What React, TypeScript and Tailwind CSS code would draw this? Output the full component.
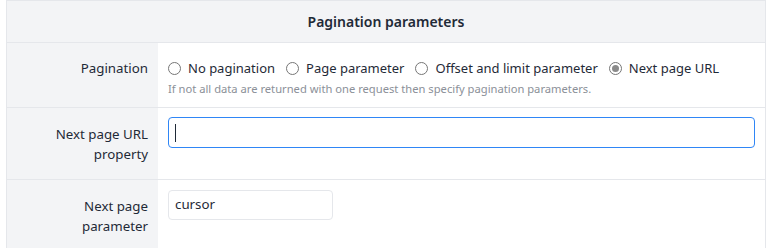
import React from "react";

function Radio({ checked, label }: { checked?: boolean; label: string }) {
  return (
    <label className="flex items-center">
      <span className="flex h-[13px] w-[13px] items-center justify-center rounded-full border border-[#767676] bg-white">
        {checked ? <span className="h-[7px] w-[7px] rounded-full bg-[#8a8a8a]" /> : null}
      </span>
      <span className="ml-[7px]">{label}</span>
    </label>
  );
}

export default function App() {
  return (
    <div
      className="h-[248px] w-[768px] overflow-hidden bg-white pl-[6px] pr-[2px] text-[13.3px] text-[#1f2a37]"
      style={{ fontFamily: '"Noto Sans", "Open Sans", sans-serif' }}
    >
      <div className="border border-[#e5e7eb]">
        <div className="flex h-[42px] items-center justify-center border-b border-[#e5e7eb] bg-[#f3f4f6] text-[14px] font-semibold">
          Pagination parameters
        </div>
        <div className="grid grid-cols-[151px_1fr] border-b border-[#e5e7eb]">
          <div className="bg-[#f3f4f6] pb-[14px] pr-[10px] pt-[15px] text-right leading-[20px]">Pagination</div>
          <div className="px-[10px] pb-[10px] pt-[15px]">
            <div className="flex items-center gap-[11px] text-[13px] leading-[20px]">
              <Radio label="No pagination" />
              <Radio label="Page parameter" />
              <Radio label="Offset and limit parameter" />
              <Radio checked label="Next page URL" />
            </div>
            <div className="mt-[3px] text-[11.2px] leading-[16px] text-[#8b9098]">
              If not all data are returned with one request then specify pagination parameters.
            </div>
          </div>
        </div>
        <div className="grid grid-cols-[151px_1fr] border-b border-[#e5e7eb]">
          <div className="bg-[#f3f4f6] pb-[15px] pr-[10px] pt-[16px] text-right leading-[20px]">
            Next page URL
            <br />
            property
          </div>
          <div className="px-[10px] pt-[9px]">
            <div className="flex h-[31px] items-center rounded-[4px] border border-[#2f86f6] px-[6px]">
              <span className="h-[18px] w-[1px] bg-[#1f2a37]" />
            </div>
          </div>
        </div>
        <div className="grid grid-cols-[151px_1fr]">
          <div className="bg-[#f3f4f6] pb-[30px] pr-[10px] pt-[16px] text-right leading-[20px]">
            Next page
            <br />
            parameter
          </div>
          <div className="px-[10px] pt-[10px]">
            <div className="flex h-[30px] w-[165px] items-center rounded-[4px] border border-[#e5e7eb] px-[6px]">
              cursor
            </div>
          </div>
        </div>
      </div>
    </div>
  );
}
